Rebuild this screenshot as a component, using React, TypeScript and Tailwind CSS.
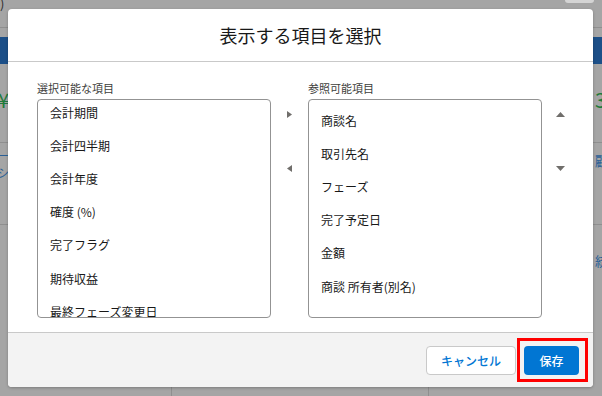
const FONT = "font-['Noto_Sans_CJK_JP','Noto_Sans',sans-serif]";

const AVAILABLE = [
  '会計期間',
  '会計四半期',
  '会計年度',
  '確度 (%)',
  '完了フラグ',
  '期待収益',
  '最終フェーズ変更日',
];

const SELECTED = [
  '商談名',
  '取引先名',
  'フェーズ',
  '完了予定日',
  '金額',
  '商談 所有者(別名)',
];

/* ─── Small triangle icons ─── */

function Tri({ dir }: { dir: 'up' | 'down' | 'left' | 'right' }) {
  if (dir === 'right' || dir === 'left') {
    const d = dir === 'right' ? 'M0 0 L5 3.5 L0 7 Z' : 'M5 0 L0 3.5 L5 7 Z';
    return (
      <svg width="5" height="7" viewBox="0 0 5 7">
        <path d={d} fill="#706e6b" />
      </svg>
    );
  }
  const d = dir === 'up' ? 'M0 5 L4.5 0 L9 5 Z' : 'M0 0 L4.5 5 L9 0 Z';
  return (
    <svg width="9" height="5" viewBox="0 0 9 5">
      <path d={d} fill="#706e6b" />
    </svg>
  );
}

function ArrowColumn({ first, second }: { first: 'up' | 'right'; second: 'down' | 'left' }) {
  return (
    <div className="w-[37px] pt-[18px] flex flex-col items-center">
      <button className="h-[30px] w-[20px] flex items-center justify-center">
        <Tri dir={first} />
      </button>
      <button className="h-[30px] w-[20px] mt-[24px] flex items-center justify-center">
        <Tri dir={second} />
      </button>
    </div>
  );
}

function ListBox({ label, items, offset }: { label: string; items: string[]; offset: string }) {
  return (
    <div className="flex flex-col w-[234px]">
      <div className="text-[11px] leading-[14px] text-[#3e3e3c]">{label}</div>
      <div className="mt-[4px] h-[219px] border border-[#939393] rounded-[4px] overflow-hidden bg-white">
        <ul className={offset}>
          {items.map((it) => (
            <li
              key={it}
              className="h-[33.2px] px-3 flex items-center text-[12px] text-[#181818] whitespace-nowrap"
            >
              {it}
            </li>
          ))}
        </ul>
      </div>
    </div>
  );
}

/* ─── Page behind the overlay (only edges visible) ─── */

function BackgroundPage() {
  return (
    <div className="flex flex-col w-full h-full text-[13px]">
      <div className="h-[28px] border-b border-[#8f8f8f] flex justify-between">
        <span className="-mt-[6px] text-[#2d2d2d]">)</span>
        <span className="w-[29px] h-[3px] mr-[8px] bg-[#d4d4d4] rounded-b-[3px]" />
      </div>
      <div className="h-[9px]" />
      <div className="h-[27px] bg-[#1c4f88]" />
      <div className="h-[79px] border-b border-[#8f8f8f] flex justify-between items-start pt-[24px]">
        <span className="text-[20px] leading-[24px] text-[#1f7a3a] -ml-[2px]">¥</span>
        <span className="text-[20px] leading-[24px] text-[#1f7a3a] -mr-[4px]">3</span>
      </div>
      <div className="h-[82px] border-b border-[#8f8f8f] flex justify-between pt-[4px] text-[#2a5f96]">
        <div className="flex flex-col text-[12px] leading-[17px] -ml-[3px]">
          <span>ー:</span>
          <span>シ</span>
        </div>
        <span className="mt-[4px] -mr-[6px]">顧</span>
      </div>
      <div className="flex-1 flex justify-end pt-[26px] text-[#2a5f96]">
        <span className="-mr-[6px]">統</span>
      </div>
      <div className="h-[9px] flex">
        <div className="w-[172px] border-r border-[#8f8f8f]" />
        <div className="w-[257px] border-r border-[#8f8f8f]" />
      </div>
    </div>
  );
}

export default function App() {
  return (
    <div className={`relative w-[602px] h-[396px] overflow-hidden bg-[#a5a5a5] ${FONT}`}>
      <BackgroundPage />

      {/* Modal */}
      <div className="absolute left-[8px] top-[9px] w-[585px] h-[378px] bg-white rounded-[4px] shadow-[0_1px_3px_rgba(0,0,0,0.25)] flex flex-col">
        <div className="h-[53px] shrink-0 border-b border-[#c9c9c9] flex items-center justify-center">
          <h2 className="text-[18px] text-[#181818]">表示する項目を選択</h2>
        </div>

        <div className="h-[270px] shrink-0 flex pl-[29px] pr-[14px] pt-[19px]">
          <ListBox label="選択可能な項目" items={AVAILABLE} offset="-mt-[4px]" />
          <ArrowColumn first="right" second="left" />
          <ListBox label="参照可能項目" items={SELECTED} offset="pt-[4px]" />
          <ArrowColumn first="up" second="down" />
        </div>

        <div className="flex-1 bg-[#f3f3f3] border-t border-[#c9c9c9] rounded-b-[4px] flex justify-end items-start pt-[13px] pr-[14px] gap-[8px]">
          <button className="w-[90px] h-[29px] bg-white border border-[#c9c9c9] rounded-[4px] text-[12px] font-medium text-[#0176d3]">
            キャンセル
          </button>
          <div className="relative">
            <button className="w-[55px] h-[29px] bg-[#0176d3] rounded-[4px] text-[12px] font-medium text-white">
              保存
            </button>
            <div className="absolute -left-[7px] -right-[9px] -top-[8px] -bottom-[7px] border-[3px] border-[#ff0000] pointer-events-none" />
          </div>
        </div>
      </div>
    </div>
  );
}
